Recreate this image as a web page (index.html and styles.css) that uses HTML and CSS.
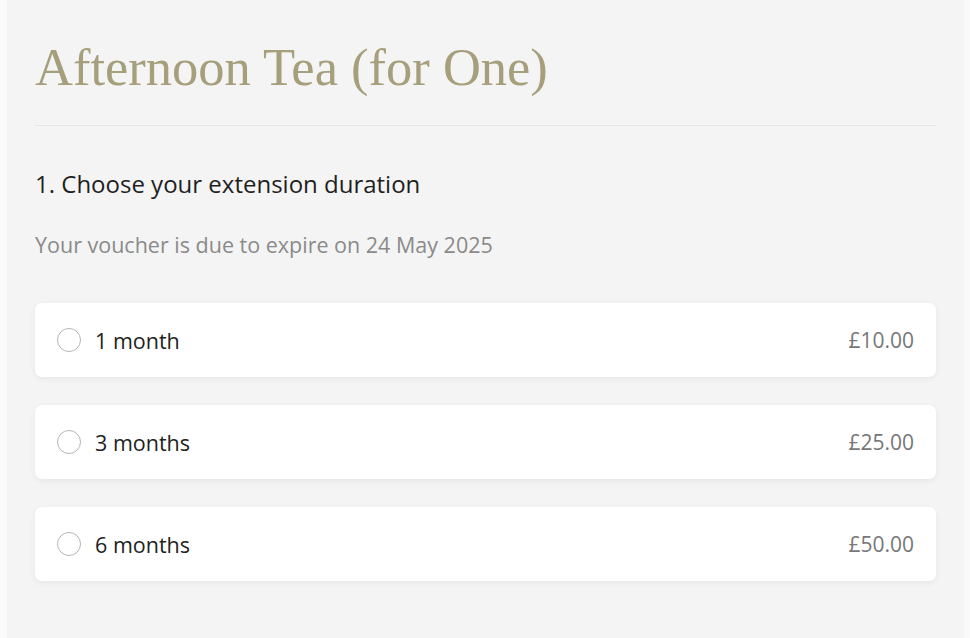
FILE: index.html
```html
<!DOCTYPE html>
<html lang="en">
<head>
    <meta charset="UTF-8">
    <meta name="viewport" content="width=device-width, initial-scale=1.0">
    <title>Extend voucher</title>
    <link rel="stylesheet" href="styles.css">
</head>
<body>
    <div class="panel">
        <h1 class="title">Afternoon Tea (for One)</h1>
        <hr class="divider">
        <h2 class="step">1. Choose your extension duration</h2>
        <p class="expiry">Your voucher is due to expire on 24 May 2025</p>

        <div class="options">
            <label class="option">
                <input type="radio" name="duration" value="1">
                <span class="radio"></span>
                <span class="option-name">1 month</span>
                <span class="option-price">£10.00</span>
            </label>
            <label class="option">
                <input type="radio" name="duration" value="3">
                <span class="radio"></span>
                <span class="option-name">3 months</span>
                <span class="option-price">£25.00</span>
            </label>
            <label class="option">
                <input type="radio" name="duration" value="6">
                <span class="radio"></span>
                <span class="option-name">6 months</span>
                <span class="option-price">£50.00</span>
            </label>
        </div>
    </div>
</body>
</html>
```

FILE: styles.css
```css
* {
    margin: 0;
    padding: 0;
    box-sizing: border-box;
}
body {
    background-color: #fafafa;
    font-family: 'Open Sans', 'Noto Sans', Arial, sans-serif;
    color: #222;
    padding: 0 6px 0 7px;
    min-height: 100vh;
}
.panel {
    background-color: #f4f4f4;
    min-height: 100vh;
    padding: 36px 28px 40px 28px;
}
.title {
    font-family: 'Liberation Serif', 'Times New Roman', serif;
    font-weight: 400;
    font-size: 52.5px;
    line-height: 62px;
    color: #a59f7b;
}
.divider {
    border: none;
    border-top: 1px solid #e6e6e6;
    margin-top: 27px;
}
.step {
    font-weight: 400;
    font-size: 24px;
    line-height: 30px;
    margin-top: 43px;
    color: #1f1f1f;
}
.expiry {
    font-size: 21.5px;
    line-height: 28px;
    color: #8a8a8a;
    margin-top: 32px;
}
.options {
    display: flex;
    flex-direction: column;
    gap: 28px;
    margin-top: 44px;
}
.option {
    display: flex;
    align-items: center;
    height: 74px;
    padding: 0 22px;
    background: #fff;
    border-radius: 7px;
    box-shadow: 0 2px 6px rgba(0, 0, 0, 0.06);
    cursor: pointer;
}
.option input {
    display: none;
}
.radio {
    width: 24px;
    height: 24px;
    border: 1px solid #b5b5b5;
    border-radius: 50%;
    margin-right: 14px;
}
.option-name {
    font-size: 21.5px;
    color: #222;
    flex: 1;
}
.option-price {
    font-size: 21px;
    color: #777;
}
```
